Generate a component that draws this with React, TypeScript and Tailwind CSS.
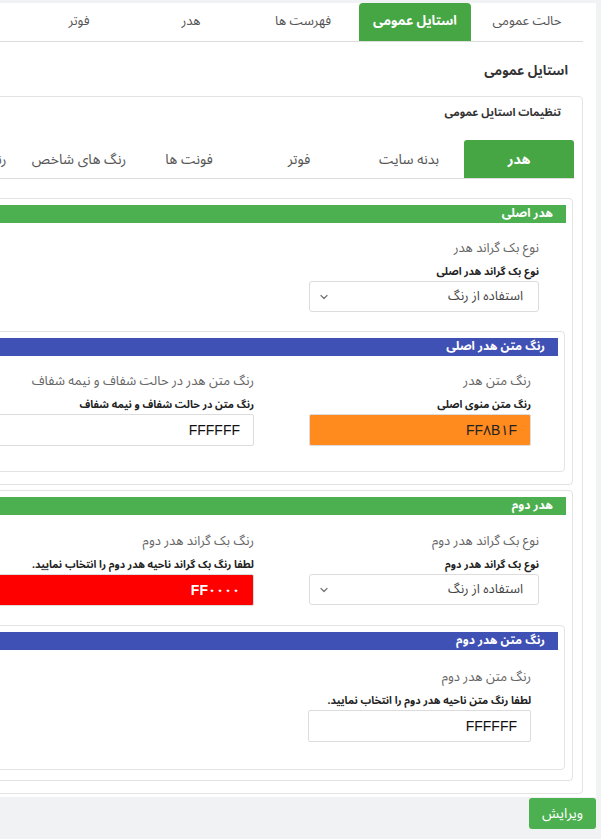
import React from "react";
import { ChevronDown } from "lucide-react";

const topTabs = ["حالت عمومی", "استایل عمومی", "فهرست ها", "هدر", "فوتر"];
const innerTabs = ["هدر", "بدنه سایت", "فوتر", "فونت ها", "رنگ های شاخص", "رنگ های متن"];

function Field({ label, hint, children }: { label: string; hint: string; children: React.ReactNode }) {
  return (
    <div>
      <div className="whitespace-nowrap text-[13px] leading-[18px] text-[#666]">{label}</div>
      <div className="mt-[8px] whitespace-nowrap text-[10.5px] font-bold leading-[14px] text-[#222]">{hint}</div>
      <div className="mt-[2px]">{children}</div>
    </div>
  );
}

function SelectBox() {
  return (
    <div className="flex h-[31px] items-center justify-between rounded-[3px] border border-[#dcdcdc] bg-white pl-[8px] pr-[15px]">
      <span className="text-[13px] text-[#444]">استفاده از رنگ</span>
      <ChevronDown size={12} strokeWidth={2.5} className="text-[#777]" />
    </div>
  );
}

function ColorInput({ value, bg, text, bold }: { value: string; bg: string; text: string; bold?: boolean }) {
  return (
    <div
      className={`flex h-[32px] items-center rounded-[2px] border border-[#dcdcdc] pr-[13px] font-['Liberation_Sans','Noto_Sans_Arabic',sans-serif] text-[14px] ${bg} ${text} ${bold ? "font-bold" : ""}`}
    >
      {value}
    </div>
  );
}

function Bar({ title, color }: { title: string; color: string }) {
  return (
    <div className={`h-[18px] whitespace-nowrap pr-[13px] text-[12px] font-bold leading-[18px] text-white ${color}`}>{title}</div>
  );
}

export default function App() {
  return (
    <div
      dir="rtl"
      className="min-h-[839px] w-full overflow-hidden bg-[#f1f2f4] pt-[3px] font-['Noto_Sans_Arabic','DejaVu_Sans',sans-serif]"
    >
      <div className="mr-[5px] w-[1100px] bg-white pb-[3px] pr-[13px]">
        {/* top tabs */}
        <div className="flex border-b border-[#ddd]">
          {topTabs.map((t, i) => (
            <div
              key={t}
              className={`flex h-[38px] w-[112px] items-center justify-center whitespace-nowrap text-[13px] ${
                i === 1 ? "rounded-t-[4px] bg-[#46a643] font-bold text-white" : "text-[#555]"
              }`}
            >
              {t}
            </div>
          ))}
        </div>

        <div className="mt-[19px] pr-[15px] text-[13px] font-bold leading-[20px] text-[#333]">استایل عمومی</div>

        {/* card */}
        <div className="mt-[15px] rounded-[4px] border border-[#e3e3e3] px-[8px] pb-[12px] pt-[8px]">
          <div className="pr-[13px] text-[11px] font-bold leading-[16px] text-[#333]">تنظیمات استایل عمومی</div>

          <div className="mt-[19px] flex border-b border-[#ddd]">
            {innerTabs.map((t, i) => (
              <div
                key={t}
                className={`flex h-[38px] w-[110px] shrink-0 items-center justify-center whitespace-nowrap text-[14px] ${
                  i === 0 ? "rounded-t-[3px] bg-[#46a643] font-bold text-white" : "text-[#555]"
                }`}
              >
                {t}
              </div>
            ))}
          </div>

          {/* box 1 */}
          <div className="mr-px mt-[19px] rounded-[4px] border border-[#e3e3e3] p-[6px] pb-[12px]">
            <Bar title="هدر اصلی" color="bg-[#4caf50]" />
            <div className="mt-[16px] grid grid-cols-[230px_230px_230px] gap-x-[55px] pr-[27px]">
              <Field label="نوع بک گراند هدر" hint="نوع بک گراند هدر اصلی">
                <SelectBox />
              </Field>
            </div>

            <div className="mr-px mt-[19px] rounded-[4px] border border-[#e3e3e3] p-[6px] pb-[25px]">
              <Bar title="رنگ متن هدر اصلی" color="bg-[#3f51b5]" />
              <div className="mt-[16px] grid grid-cols-[222px_300px] gap-x-[55px] pr-[27px]">
                <Field label="رنگ متن هدر" hint="رنگ متن منوی اصلی">
                  <ColorInput value="FF۸B۱F" bg="bg-[#ff8b1f]" text="text-[#222]" />
                </Field>
                <Field label="رنگ متن هدر در حالت شفاف و نیمه شفاف" hint="رنگ متن در حالت شفاف و نیمه شفاف">
                  <ColorInput value="FFFFFF" bg="bg-white" text="text-[#111]" />
                </Field>
              </div>
            </div>
          </div>

          {/* box 2 */}
          <div className="mr-px mt-[5px] rounded-[4px] border border-[#e3e3e3] p-[6px] pb-[10px]">
            <Bar title="هدر دوم" color="bg-[#4caf50]" />
            <div className="mt-[17px] grid grid-cols-[230px_300px] gap-x-[55px] pr-[27px]">
              <Field label="نوع بک گراند هدر دوم" hint="نوع بک گراند هدر دوم">
                <SelectBox />
              </Field>
              <Field label="رنگ بک گراند هدر دوم" hint="لطفا رنگ بک گراند ناحیه هدر دوم را انتخاب نمایید.">
                <ColorInput value="FF۰۰۰۰" bg="bg-[#ff0000]" text="text-white" bold />
              </Field>
            </div>

            <div className="mr-px mt-[19px] rounded-[4px] border border-[#e3e3e3] p-[6px] pb-[27px]">
              <Bar title="رنگ متن هدر دوم" color="bg-[#3f51b5]" />
              <div className="mt-[18px] grid grid-cols-[223px_222px] gap-x-[55px] pr-[27px]">
                <Field label="رنگ متن هدر دوم" hint="لطفا رنگ متن ناحیه هدر دوم را انتخاب نمایید.">
                  <ColorInput value="FFFFFF" bg="bg-white" text="text-[#111]" />
                </Field>
              </div>
            </div>
          </div>
        </div>
      </div>

      <div className="mr-[5px] mt-px flex">
        <button className="flex h-[31px] w-[67px] items-center justify-center rounded-[3px] bg-[#4caf50] text-[14px] text-white">
          ویرایش
        </button>
      </div>
    </div>
  );
}
